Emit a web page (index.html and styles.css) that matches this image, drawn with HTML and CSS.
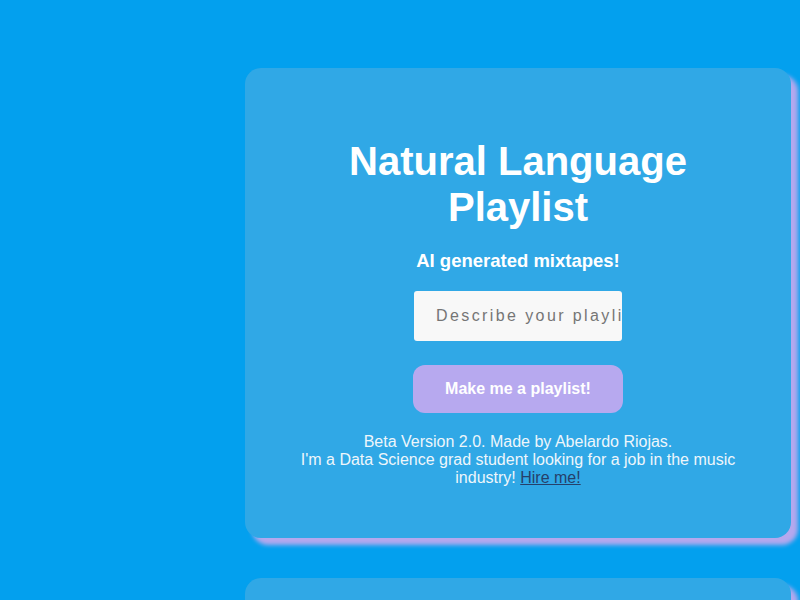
FILE: index.html
```html
<!DOCTYPE html>
<html lang="en">
<head>
    <meta charset="UTF-8">
    <meta name="viewport" content="width=device-width, initial-scale=1.0">
    <title>Natural Language Playlist</title>
    <link rel="stylesheet" href="styles.css">
</head>
<body>
    <div class="page">
        <div class="card">
            <h1>Natural Language Playlist</h1>
            <h3>AI generated mixtapes!</h3>
            <form id="playlistForm">
                <input type="text" name="prompt" placeholder="Describe your playlist">
                <button type="submit">Make me a playlist!</button>
            </form>
            <p class="footer">
                Beta Version 2.0. Made by Abelardo Riojas.<br>
                I'm a Data Science grad student looking for a job in the music industry! <a href="#">Hire me!</a>
            </p>
        </div>
        <div class="card results"></div>
    </div>
</body>
</html>
```

FILE: styles.css
```css
body {
    font-family: "Liberation Sans", Arial, sans-serif;
    margin: 0;
    padding: 0;
    background-color: #03a0ee;
    overflow: hidden;
    height: 100vh;
}

.page {
    display: flex;
    flex-direction: column;
    gap: 40px;
    padding: 68px 0 0 245px;
}

.card {
    width: 546px;
    box-sizing: border-box;
    padding: 70px 40px 51px;
    background: #30a8e6;
    border-radius: 16px;
    box-shadow: 7px 7px 4px #b4a8ee;
    text-align: center;
    color: white;
}

.card.results {
    min-height: 200px;
}

h1 {
    margin: 0;
    font-size: 40px;
    line-height: 46px;
    font-weight: bold;
}

h3 {
    margin: 20px 0 0;
    font-size: 18.5px;
    line-height: 22px;
}

form {
    display: flex;
    flex-direction: column;
    align-items: center;
    gap: 24px;
    margin-top: 19px;
}

input {
    width: 208px;
    height: 50px;
    box-sizing: border-box;
    padding: 0 0 0 22px;
    border: none;
    border-radius: 3px;
    background: #f8f8f8;
    font-family: inherit;
    font-size: 16px;
    letter-spacing: 2.4px;
    color: #555;
    outline: none;
}

input::placeholder {
    color: #757575;
}

button {
    width: 210px;
    height: 48px;
    border: none;
    border-radius: 12px;
    background: #b7a9ef;
    color: white;
    font-family: inherit;
    font-size: 16px;
    font-weight: bold;
    cursor: pointer;
}

.footer {
    margin: 20px 0 0;
    font-size: 16px;
    line-height: 18px;
    color: #eef6fb;
}

.footer a {
    color: #26406a;
}
```
